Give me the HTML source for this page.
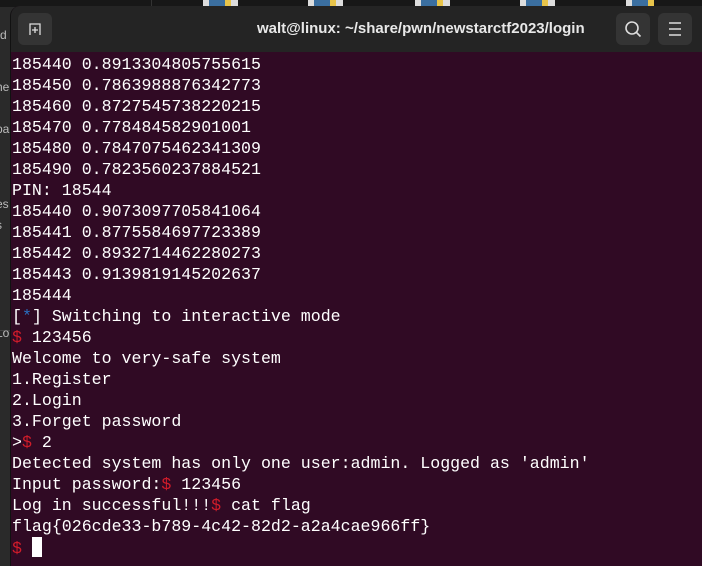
<!DOCTYPE html>
<html><head><style>
body{margin:0;width:702px;height:566px;background:#2a2a2a;overflow:hidden;position:relative;font-family:"Liberation Sans",sans-serif}
.top{position:absolute;left:0;top:0;width:702px;height:7px;background:#171717}
.ic{position:absolute;top:0;width:35px;height:6px;background:linear-gradient(90deg,#ddd 0 6px,#3b6fa0 6px 22px,#e8c44a 22px 28px,#ddd 28px)}
.lt{position:absolute;left:-4px;color:#bbb;font-size:12px}
.win{position:absolute;left:10px;top:6px;width:692px;height:560px;background:#300a24;border-radius:10px 0 0 0;overflow:hidden;border-left:1px solid #111}
.hd{height:46px;background:#242424;position:relative}
.btn{position:absolute;top:7px;width:34px;height:32px;background:#343434;border-radius:6px}
.title{position:absolute;left:246px;top:14px;color:#e8e8e8;font-weight:bold;font-size:15px;white-space:nowrap}
pre{margin:0;padding:0 0 0 1px;font-family:"Liberation Mono",monospace;font-size:16.6px;line-height:21px;color:#fff;position:absolute;top:48px}
.r{color:#d01c2a}.b{color:#2a6fc0}
.cur{display:inline-block;width:10px;height:20px;background:#fff;vertical-align:-4px}
</style></head><body>
<div class="top"></div>
<div style="position:absolute;left:151px;top:0;width:1px;height:7px;background:#333"></div>
<div class="ic" style="left:203px"></div><div class="ic" style="left:308px"></div><div class="ic" style="left:415px"></div><div class="ic" style="left:520px"></div><div class="ic" style="left:626px;width:28px"></div>
<div class="lt" style="top:28px;left:0">d</div>
<div class="lt" style="top:80px">he</div>
<div class="lt" style="top:122px">pa</div>
<div class="lt" style="top:197px">es</div>
<div class="lt" style="top:218px">s</div>
<div style="position:absolute;left:0;top:330px;width:10px;height:1px;background:#444"></div>
<div class="lt" style="top:326px">Lo</div>
<div class="win">
<div class="hd">
<div class="btn" style="left:7px;top:7px"><svg width="34" height="32" viewBox="0 0 34 32"><path d="M12 22V11h10v11M17 14v6M14 17h6" stroke="#ddd" stroke-width="1.3" fill="none"/></svg></div>
<div class="title">walt@linux: ~/share/pwn/newstarctf2023/login</div>
<div class="btn" style="left:605px"><svg width="34" height="32"><circle cx="16" cy="15" r="6" stroke="#ddd" stroke-width="1.6" fill="none"/><path d="M20.5 19.5l4 4" stroke="#ddd" stroke-width="1.6"/></svg></div>
<div class="btn" style="left:647px"><svg width="34" height="32"><path d="M11 10h12M11 16h12M11 22h12" stroke="#ddd" stroke-width="1.4"/></svg></div>
</div>
<pre>185440 0.8913304805755615
185450 0.7863988876342773
185460 0.8727545738220215
185470 0.778484582901001
185480 0.7847075462341309
185490 0.7823560237884521
PIN: 18544
185440 0.9073097705841064
185441 0.8775584697723389
185442 0.8932714462280273
185443 0.9139819145202637
185444
[<span class="b">*</span>] Switching to interactive mode
<span class="r">$</span> 123456
Welcome to very-safe system
1.Register
2.Login
3.Forget password
&gt;<span class="r">$</span> 2
Detected system has only one user:admin. Logged as 'admin'
Input password:<span class="r">$</span> 123456
Log in successful!!!<span class="r">$</span> cat flag
flag{026cde33-b789-4c42-82d2-a2a4cae966ff}
<span class="r">$</span> <span class="cur"></span></pre>
</div>
</body></html>
